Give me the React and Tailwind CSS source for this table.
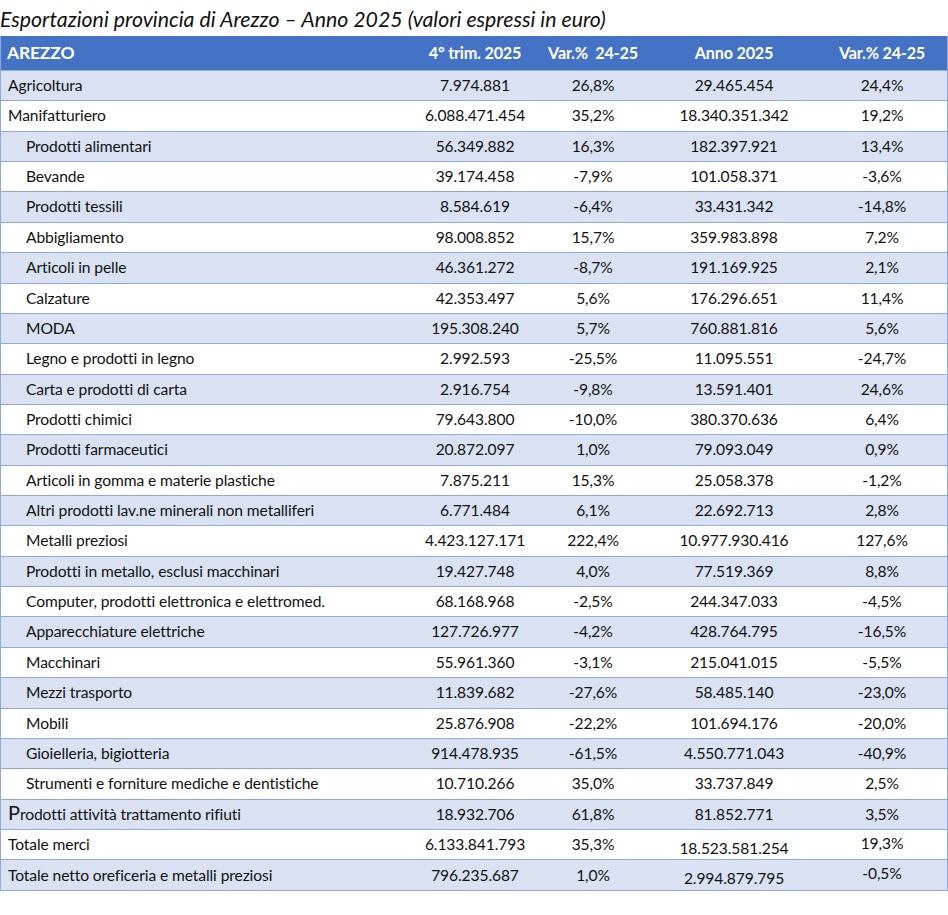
const rows = [
  ['Agricoltura', '7.974.881', '26,8%', '29.465.454', '24,4%', 0],
  ['Manifatturiero', '6.088.471.454', '35,2%', '18.340.351.342', '19,2%', 0],
  ['Prodotti alimentari', '56.349.882', '16,3%', '182.397.921', '13,4%', 1],
  ['Bevande', '39.174.458', '-7,9%', '101.058.371', '-3,6%', 1],
  ['Prodotti tessili', '8.584.619', '-6,4%', '33.431.342', '-14,8%', 1],
  ['Abbigliamento', '98.008.852', '15,7%', '359.983.898', '7,2%', 1],
  ['Articoli in pelle', '46.361.272', '-8,7%', '191.169.925', '2,1%', 1],
  ['Calzature', '42.353.497', '5,6%', '176.296.651', '11,4%', 1],
  ['MODA', '195.308.240', '5,7%', '760.881.816', '5,6%', 1],
  ['Legno e prodotti in legno', '2.992.593', '-25,5%', '11.095.551', '-24,7%', 1],
  ['Carta e prodotti di carta', '2.916.754', '-9,8%', '13.591.401', '24,6%', 1],
  ['Prodotti chimici', '79.643.800', '-10,0%', '380.370.636', '6,4%', 1],
  ['Prodotti farmaceutici', '20.872.097', '1,0%', '79.093.049', '0,9%', 1],
  ['Articoli in gomma e materie plastiche', '7.875.211', '15,3%', '25.058.378', '-1,2%', 1],
  ['Altri prodotti lav.ne minerali non metalliferi', '6.771.484', '6,1%', '22.692.713', '2,8%', 1],
  ['Metalli preziosi', '4.423.127.171', '222,4%', '10.977.930.416', '127,6%', 1],
  ['Prodotti in metallo, esclusi macchinari', '19.427.748', '4,0%', '77.519.369', '8,8%', 1],
  ['Computer, prodotti elettronica e elettromed.', '68.168.968', '-2,5%', '244.347.033', '-4,5%', 1],
  ['Apparecchiature elettriche', '127.726.977', '-4,2%', '428.764.795', '-16,5%', 1],
  ['Macchinari', '55.961.360', '-3,1%', '215.041.015', '-5,5%', 1],
  ['Mezzi trasporto', '11.839.682', '-27,6%', '58.485.140', '-23,0%', 1],
  ['Mobili', '25.876.908', '-22,2%', '101.694.176', '-20,0%', 1],
  ['Gioielleria, bigiotteria', '914.478.935', '-61,5%', '4.550.771.043', '-40,9%', 1],
  ['Strumenti e forniture mediche e dentistiche', '10.710.266', '35,0%', '33.737.849', '2,5%', 1],
  ['Prodotti attività trattamento rifiuti', '18.932.706', '61,8%', '81.852.771', '3,5%', 2],
  ['Totale merci', '6.133.841.793', '35,3%', '18.523.581.254', '19,3%', 3],
  ['Totale netto oreficeria e metalli preziosi', '796.235.687', '1,0%', '2.994.879.795', '-0,5%', 3],
]

const cols = 'grid grid-cols-[410px_128px_108px_174px_127px]'

export default function App() {
  return (
    <div className="w-[948px] bg-white text-[#111] font-['Lato','Open_Sans',sans-serif]">
      <div className="h-[36px] pt-[6px] text-[21.3px] leading-[26px] italic">
        Esportazioni provincia di Arezzo – Anno 2025 (valori espressi in euro)
      </div>
      <div className="border-x border-b border-[#8eaadb]">
        <div className={`${cols} h-[34px] items-center bg-[#4472c4] text-white font-bold text-[16.2px] tracking-[-0.2px]`}>
          <div className="pl-[6px] text-[17.5px]">AREZZO</div>
          <div className="text-center">4° trim. 2025</div>
          <div className="text-center">Var.%&nbsp; 24-25</div>
          <div className="text-center">Anno 2025</div>
          <div className="text-center pr-[5px]">Var.% 24-25</div>
        </div>
        {rows.map(([label, a, b, c, d, kind], i) => (
          <div key={label}
            className={`${cols} h-[30.37px] items-center border-t border-[#8eaadb] text-[15.6px] tracking-[-0.1px] ${i % 2 === 0 ? 'bg-[#d9e1f2]' : 'bg-white'}`}>
            <div className={kind === 1 ? 'pl-[25px]' : 'pl-[7px]'}>
              {kind === 2 ? (
                <><span className="text-[20px] leading-none">P</span>{label.slice(1)}</>
              ) : label}
            </div>
            <div className="text-center">{a}</div>
            <div className="text-center">{b}</div>
            <div className={`text-center ${kind === 3 ? 'pt-[7px]' : ''}`}>{c}</div>
            <div className={`text-center pr-[5px] ${kind === 3 ? 'pb-[3px]' : ''}`}>{d}</div>
          </div>
        ))}
      </div>
    </div>
  )
}
